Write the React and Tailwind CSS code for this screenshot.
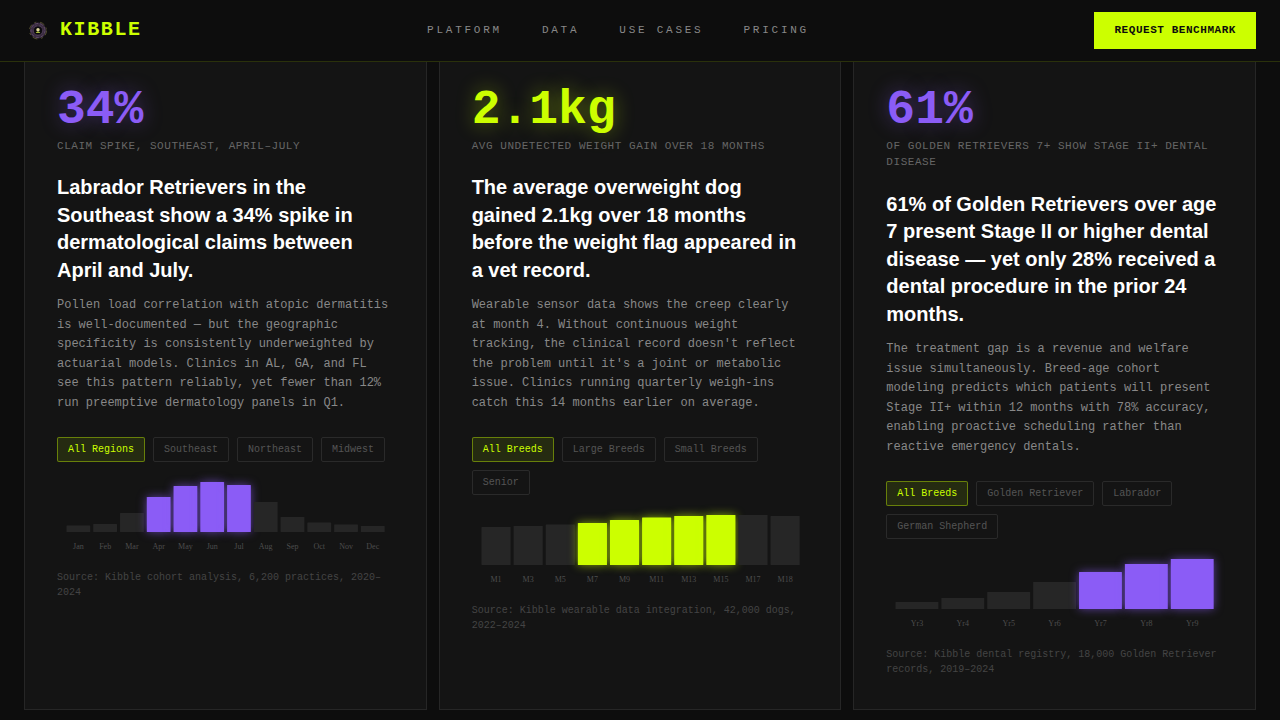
// Insight cards for the Kibble landing page

import { useState } from 'react'

const LIME = '#ccff00'
const PURPLE = '#8b5cf6'

const NAV_LINKS = ['Platform', 'Data', 'Use Cases', 'Pricing']

const INSIGHTS = [
  {
    id: 'derm',
    stat: '34%',
    accent: 'purple',
    label: 'Claim spike, Southeast, April–July',
    title: 'Labrador Retrievers in the Southeast show a 34% spike in dermatological claims between April and July.',
    body: 'Pollen load correlation with atopic dermatitis is well-documented — but the geographic specificity is consistently underweighted by actuarial models. Clinics in AL, GA, and FL see this pattern reliably, yet fewer than 12% run preemptive dermatology panels in Q1.',
    filters: ['All Regions', 'Southeast', 'Northeast', 'Midwest'],
    source: 'Source: Kibble cohort analysis, 6,200 practices, 2020–2024',
    data: [
      { label: 'Jan', value: 13 },
      { label: 'Feb', value: 16 },
      { label: 'Mar', value: 38 },
      { label: 'Apr', value: 70, hot: true },
      { label: 'May', value: 92, hot: true },
      { label: 'Jun', value: 100, hot: true },
      { label: 'Jul', value: 94, hot: true },
      { label: 'Aug', value: 60 },
      { label: 'Sep', value: 30 },
      { label: 'Oct', value: 19 },
      { label: 'Nov', value: 15 },
      { label: 'Dec', value: 12 },
    ],
  },
  {
    id: 'weight',
    stat: '2.1kg',
    accent: 'lime',
    label: 'Avg undetected weight gain over 18 months',
    title: 'The average overweight dog gained 2.1kg over 18 months before the weight flag appeared in a vet record.',
    body: "Wearable sensor data shows the creep clearly at month 4. Without continuous weight tracking, the clinical record doesn't reflect the problem until it's a joint or metabolic issue. Clinics running quarterly weigh-ins catch this 14 months earlier on average.",
    filters: ['All Breeds', 'Large Breeds', 'Small Breeds', 'Senior'],
    source: 'Source: Kibble wearable data integration, 42,000 dogs, 2022–2024',
    data: [
      { label: 'M1', value: 76 },
      { label: 'M3', value: 78 },
      { label: 'M5', value: 81 },
      { label: 'M7', value: 84, hot: true },
      { label: 'M9', value: 90, hot: true },
      { label: 'M11', value: 95, hot: true },
      { label: 'M13', value: 98, hot: true },
      { label: 'M15', value: 100, hot: true },
      { label: 'M17', value: 100 },
      { label: 'M18', value: 98 },
    ],
  },
  {
    id: 'dental',
    stat: '61%',
    accent: 'purple',
    label: 'Of Golden Retrievers 7+ show Stage II+ dental disease',
    title: '61% of Golden Retrievers over age 7 present Stage II or higher dental disease — yet only 28% received a dental procedure in the prior 24 months.',
    body: 'The treatment gap is a revenue and welfare issue simultaneously. Breed-age cohort modeling predicts which patients will present Stage II+ within 12 months with 78% accuracy, enabling proactive scheduling rather than reactive emergency dentals.',
    filters: ['All Breeds', 'Golden Retriever', 'Labrador', 'German Shepherd'],
    source: 'Source: Kibble dental registry, 18,000 Golden Retriever records, 2019–2024',
    data: [
      { label: 'Yr3', value: 14 },
      { label: 'Yr4', value: 22 },
      { label: 'Yr5', value: 34 },
      { label: 'Yr6', value: 54 },
      { label: 'Yr7', value: 74, hot: true },
      { label: 'Yr8', value: 90, hot: true },
      { label: 'Yr9', value: 100, hot: true },
    ],
  },
]

const Logo = () => (
  <svg viewBox="0 0 28 28" className="size-7" fill="none" aria-hidden="true">
    <circle cx="14" cy="14.5" r="6" stroke="#3a2c40" strokeWidth="4" />
    <circle cx="14" cy="14.5" r="8.5" stroke="#55502f" strokeWidth="1" strokeDasharray="5 3 2 4" />
    <circle cx="14" cy="14.5" r="7" stroke="#5f4a68" strokeWidth="1" strokeDasharray="3 2" />
    <circle cx="14" cy="14.5" r="5" stroke="#4d3b55" strokeWidth="1" strokeDasharray="4 2" />
    <circle cx="14" cy="14.5" r="3.6" fill="#0c0a0d" />
    <circle cx="14" cy="13.8" r="1.7" fill="#e0d8a0" />
    <path d="M11.8 17c.4-2 4-2 4.4 0z" fill="#a5b83a" />
  </svg>
)

const BarChart = ({ data, accent }) => {
  const left = 8
  const baseline = 54
  const band = 321.5 / data.length
  const color = accent === 'lime' ? LIME : PURPLE
  const glow = accent === 'lime' ? 'drop-shadow-[0_0_5px_#ccff0099]' : 'drop-shadow-[0_0_5px_#8b5cf699]'

  return (
    <svg viewBox="0 0 337 76" className="block w-full overflow-visible">
      {data.map((item, index) => {
        const x = left + index * band
        const height = item.value / 2
        return (
          <g key={item.label}>
            <rect
              x={x + 1.5}
              y={baseline - height}
              width={band - 3}
              height={height}
              rx="0.5"
              fill={item.hot ? color : '#262626'}
              className={item.hot ? glow : undefined}
            />
            <text
              x={x + band / 2}
              y="71"
              textAnchor="middle"
              fontSize="8"
              fill="#4d4d4d"
              className="font-['Liberation_Serif',serif]"
            >
              {item.label}
            </text>
          </g>
        )
      })}
    </svg>
  )
}

const InsightCard = ({ insight }) => {
  const [active, setActive] = useState(insight.filters[0])

  return (
    <article className="border border-[#262626] bg-[#141414] p-8">
      <p
        className={
          insight.accent === 'lime'
            ? 'text-5xl leading-none font-bold text-[#ccff00] [text-shadow:0_0_20px_#ccff0066]'
            : 'text-5xl leading-none font-bold text-[#8b5cf6] [text-shadow:0_0_20px_#8b5cf666]'
        }
      >
        {insight.stat}
      </p>
      <p className="mt-1 mb-5 text-[11px] leading-normal tracking-wider text-[#666666] uppercase">{insight.label}</p>

      <h3 className="mb-3 font-['Liberation_Sans',sans-serif] text-xl leading-snug font-bold text-white">
        {insight.title}
      </h3>
      <p className="mb-6 text-xs leading-relaxed text-[#888888]">{insight.body}</p>

      {/* Segment filters */}
      <div className="mb-4 flex flex-wrap gap-2">
        {insight.filters.map(filter => (
          <button
            key={filter}
            type="button"
            aria-pressed={filter === active}
            onClick={() => setActive(filter)}
            className={
              filter === active
                ? 'cursor-pointer rounded-xs border border-[#ccff00]/40 bg-[#ccff00]/10 px-2.5 py-1 text-[10px] leading-normal text-[#ccff00]'
                : 'cursor-pointer rounded-xs border border-[#2a2a2a] px-2.5 py-1 text-[10px] leading-normal text-[#555555]'
            }
          >
            {filter}
          </button>
        ))}
      </div>

      <BarChart data={insight.data} accent={insight.accent} />

      <p className="mt-4 text-[10px] leading-normal text-[#444444]">{insight.source}</p>
    </article>
  )
}

const App = () => (
  <div className="min-h-screen bg-[#0d0d0d] font-['Liberation_Mono',monospace]">
    <header className="sticky inset-x-0 top-0 z-10 flex items-center justify-between border-b border-[#ccff00]/15 bg-[#0d0d0d] px-6 py-3">
      <a href="#top" className="flex items-center gap-2">
        <Logo />
        <span className="text-xl font-bold tracking-[0.08em] text-[#ccff00]">KIBBLE</span>
      </a>
      <nav className="flex gap-10">
        {NAV_LINKS.map(link => (
          <a key={link} href="#top" className="text-[11px] leading-normal tracking-[0.25em] text-[#888888] uppercase">
            {link}
          </a>
        ))}
      </nav>
      <button
        type="button"
        className="cursor-pointer bg-[#ccff00] px-5 py-2.5 text-[11px] leading-normal font-bold tracking-wider text-[#0d0d0d] uppercase"
      >
        Request Benchmark
      </button>
    </header>

    {/* Cards tuck in under the sticky header */}
    <main className="-mt-[9px] grid grid-cols-1 gap-3 px-6 pb-2.5 md:grid-cols-3">
      {INSIGHTS.map(insight => (
        <InsightCard key={insight.id} insight={insight} />
      ))}
    </main>
  </div>
)

export default App
